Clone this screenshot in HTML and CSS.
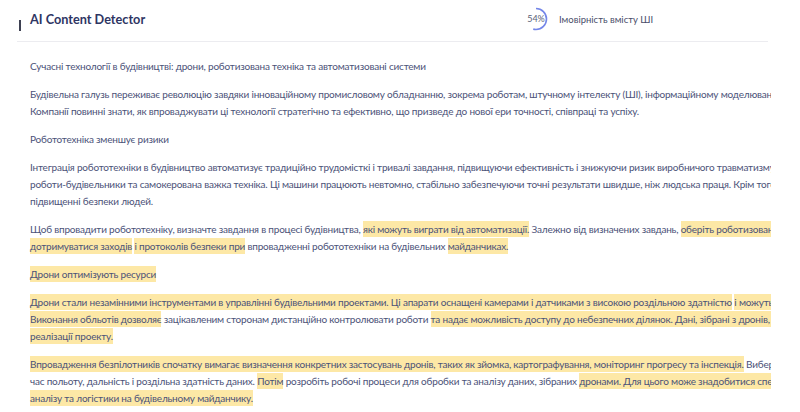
FILE: index.html
```html
<!DOCTYPE html>
<html lang="uk">
<head>
  <meta charset="UTF-8">
  <meta name="viewport" content="width=device-width, initial-scale=1.0">
  <title>AI Content Detector</title>
  <link rel="stylesheet" href="styles.css">
</head>
<body>
  <div class="panel">
    <div class="header">
      <div class="title">AI Content Detector</div>
      <div class="score">
        <div class="ring">
          <svg width="24" height="24" viewBox="0 0 24 24">
            <circle cx="12" cy="12" r="10.5" fill="none" stroke="#7486e8" stroke-width="1.6"
              stroke-dasharray="35.6 66" transform="rotate(-90 12 12)" />
          </svg>
          <span class="pct">54%</span>
        </div>
        <span class="score-label">Імовірність вмісту ШІ</span>
      </div>
    </div>

    <div class="content">
      <div class="text">
        <p>Сучасні технології в будівництві: дрони, роботизована техніка та автоматизовані системи</p>
        <p>Будівельна галузь переживає революцію завдяки інноваційному промисловому обладнанню, зокрема роботам, штучному інтелекту (ШІ), інформаційному моделюванню будівель (BIM).<br>Компанії повинні знати, як впроваджувати ці технології стратегічно та ефективно, що призведе до нової ери точності, співпраці та успіху.</p>
        <p>Робототехніка зменшує ризики</p>
        <p>Інтеграція робототехніки в будівництво автоматизує традиційно трудомісткі і тривалі завдання, підвищуючи ефективність і знижуючи ризик виробничого травматизму. Це<br>роботи-будівельники та самокерована важка техніка. Ці машини працюють невтомно, стабільно забезпечуючи точні результати швидше, ніж людська праця. Крім того, вони сприяють<br>підвищенні безпеки людей.</p>
        <p>Щоб впровадити робототехніку, визначте завдання в процесі будівництва, <mark>які можуть виграти від автоматизації.</mark> Залежно від визначених завдань, <mark>оберіть роботизоване обладнання та</mark><br><mark>дотримуватися заходів</mark> <mark>і протоколів безпеки при</mark> впровадженні робототехніки на будівельних <mark>майданчиках.</mark></p>
        <p><mark>Дрони оптимізують ресурси</mark></p>
        <p><mark>Дрони стали незамінними інструментами в управлінні будівельними проектами. Ці апарати оснащені камерами і датчиками з високою роздільною здатністю</mark> <mark>і можуть робити знімки.</mark><br><mark>Виконання обльотів дозволяє</mark> зацікавленим сторонам дистанційно контролювати роботи <mark>та надає можливість доступу до небезпечних ділянок. Дані, зібрані з дронів, можна використати для<br>реалізації проекту.</mark></p>
        <p><mark>Впровадження безпілотників спочатку вимагає визначення конкретних застосувань дронів, таких як зйомка, картографування, моніторинг прогресу та інспекція.</mark> Виберіть дрони, враховуючи<br>час польоту, дальність і роздільна здатність даних. <mark>Потім</mark> розробіть робочі процеси для обробки та аналізу даних, зібраних <mark>дронами. Для цього може знадобитися спеціальне ПЗ для<br>аналізу та логістики на будівельному майданчику.</mark></p>
      </div>
    </div>
  </div>
</body>
</html>
```

FILE: styles.css
```css
body {
  margin: 0;
  background: #ffffff;
  font-family: Lato, "Noto Sans", sans-serif;
  color: #4b5278;
}
.panel {
  width: 751px;
  margin-left: 17px;
}
.header {
  display: flex;
  align-items: center;
  height: 38px;
  padding-bottom: 3px;
  border-bottom: 1px solid #ececf0;
  position: relative;
}
.header::before {
  content: "";
  position: absolute;
  left: 2px;
  top: 20px;
  width: 2px;
  height: 11px;
  background: #3e4152;
}
.title {
  flex: 0 0 507px;
  padding-left: 13px;
  box-sizing: border-box;
  font-size: 12.7px;
  font-weight: bold;
  color: #2e3563;
}
.score {
  display: flex;
  align-items: center;
  gap: 11px;
}
.ring {
  position: relative;
  width: 24px;
  height: 24px;
}
.ring svg { display: block; }
.pct {
  position: absolute;
  left: 0;
  right: 0;
  top: 6px;
  text-align: center;
  font-size: 9px;
  color: #5a5f78;
}
.score-label {
  font-size: 9.5px;
  color: #4a4d6a;
}
.content {
  overflow: hidden;
  width: 754px;
  padding-top: 16px;
}
.text {
  margin-left: 13px;
  white-space: nowrap;
  font-size: 10px;
  letter-spacing: -0.2px;
  line-height: 17px;
}
.text p {
  margin: 0 0 11px;
}
mark {
  padding: 2px 0;
  background: #fde8a6;
  color: #4b5278;
}
```
